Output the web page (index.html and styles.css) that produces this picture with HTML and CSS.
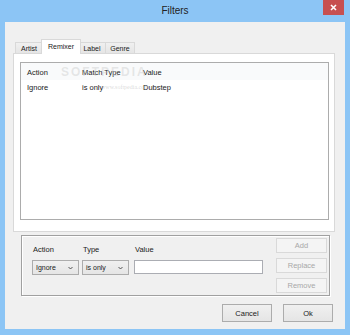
FILE: index.html
```html
<!DOCTYPE html>
<html lang="en">
<head>
    <meta charset="UTF-8">
    <title>Filters</title>
    <link rel="stylesheet" href="styles.css">
</head>
<body>
    <div class="window">
        <div class="titlebar">
            <span class="title">Filters</span>
            <div class="close">
                <svg width="7" height="7" viewBox="0 0 7 7"><path d="M1 1L6 6M6 1L1 6" stroke="#fff" stroke-width="1.6"/></svg>
            </div>
        </div>

        <div class="client">
            <div class="tabs">
                <div class="tab tab-artist">Artist</div>
                <div class="tab tab-remixer active">Remixer</div>
                <div class="tab tab-label">Label</div>
                <div class="tab tab-genre">Genre</div>
            </div>

            <div class="tab-panel">
                <div class="listview">
                    <div class="lv-row lv-head">
                        <span class="col-action">Action</span>
                        <span class="col-type">Match Type</span>
                        <span>Value</span>
                    </div>
                    <div class="lv-row">
                        <span class="col-action">Ignore</span>
                        <span class="col-type">is only</span>
                        <span>Dubstep</span>
                    </div>
                    <!-- site watermark over the list -->
                    <div class="watermark">SOFTPEDIA</div>
                    <div class="watermark-url">www.softpedia.com</div>
                </div>
            </div>

            <div class="groupbox">
                <div class="editor">
                    <span class="field-label">Action</span>
                    <span class="field-label">Type</span>
                    <span class="field-label field-value">Value</span>

                    <div class="combo">
                        <span>Ignore</span>
                        <svg width="5" height="4" viewBox="0 0 5 4"><path d="M0.5 1L2.5 3L4.5 1" fill="none" stroke="#444" stroke-width="0.9"/></svg>
                    </div>
                    <div class="combo">
                        <span>is only</span>
                        <svg width="5" height="4" viewBox="0 0 5 4"><path d="M0.5 1L2.5 3L4.5 1" fill="none" stroke="#444" stroke-width="0.9"/></svg>
                    </div>
                    <div class="textbox field-value"></div>
                </div>

                <div class="side-buttons">
                    <div class="btn disabled">Add</div>
                    <div class="btn disabled">Replace</div>
                    <div class="btn disabled">Remove</div>
                </div>
            </div>

            <div class="dialog-buttons">
                <div class="btn btn-cancel">Cancel</div>
                <div class="btn btn-ok">Ok</div>
            </div>
        </div>
    </div>
</body>
</html>
```

FILE: styles.css
```css
:root {
    --frame: #8cc5f5;
    --face: #f0f0f0;
    --tab-border: #d9d9d9;
    --btn-border: #acacac;
    --text: #1a1a1a;
}

* {
    box-sizing: border-box;
    margin: 0;
    padding: 0;
}

body {
    font-family: "Liberation Sans", Arial, sans-serif;
    font-size: 7.5px;
    color: var(--text);
    background: var(--frame);
}

.window {
    width: 350px;
    height: 335px;
    background: var(--frame);
    padding: 0 5px 6px 5px;
    display: flex;
    flex-direction: column;
}

.titlebar {
    height: 22px;
    position: relative;
    display: flex;
    justify-content: center;
    align-items: center;
    padding-bottom: 1px;
}

.title {
    font-size: 10px;
    color: #222;
}

.close {
    position: absolute;
    top: 0;
    right: 1px;
    width: 21px;
    height: 15px;
    background: #c75050;
    display: flex;
    justify-content: center;
    align-items: center;
}

.client {
    flex: 1;
    background: var(--face);
    display: flex;
    flex-direction: column;
    align-items: flex-start;
}

/* tabs */
.tabs {
    display: flex;
    align-items: flex-end;
    height: 14px;
    margin-top: 17px;
    margin-left: 10px;
    position: relative;
    z-index: 1;
}

.tab {
    height: 11px;
    border: 1px solid var(--tab-border);
    border-bottom: none;
    background: linear-gradient(#f0f0f0, #e5e5e5);
    display: flex;
    justify-content: center;
    align-items: center;
    font-size: 7px;
}

.tab-artist { width: 28px; }
.tab-label { width: 27px; border-left: none; }
.tab-genre { width: 29px; border-left: none; }

.tab.active {
    width: 40px;
    height: 15px;
    margin: 0 -2px -1px -2px;
    background: #fff;
    padding-bottom: 2px;
    position: relative;
    z-index: 2;
}

.tab-panel {
    width: 322px;
    height: 179px;
    margin-left: 8px;
    border: 1px solid var(--tab-border);
    background: #fff;
    padding: 8px 5px 11px 6px;
    display: flex;
    align-self: flex-start;
}

.listview {
    flex: 1;
    border: 1px solid #acacac;
    background: #fff;
    position: relative;
}

.lv-row {
    display: flex;
    height: 14px;
    align-items: center;
    padding-left: 6px;
}

.lv-head {
    height: 17px;
    background: #f9fafb;
    padding-top: 2px;
}

.col-action { width: 55px; }
.col-type { width: 61px; }

.watermark {
    position: absolute;
    left: 40px;
    top: 2px;
    font-size: 12px;
    letter-spacing: 2px;
    color: rgba(190, 190, 190, 0.35);
    font-weight: bold;
}

.watermark-url {
    position: absolute;
    left: 80px;
    top: 21px;
    font-size: 6px;
    color: rgba(170, 170, 170, 0.45);
    font-family: "Liberation Serif", serif;
}

/* lower group */
.groupbox {
    width: 309px;
    height: 61px;
    margin: 3px 0 0 16px;
    border: 1px solid #a0a0a0;
    box-shadow: inset 1px 1px #fff, 1px 1px #fff;
    display: flex;
    justify-content: space-between;
    padding: 2px 2px 2px 10px;
}

.editor {
    display: grid;
    grid-template-columns: 47px 47px 131px;
    grid-template-rows: 12px 15px;
    column-gap: 3px;
    row-gap: 5px;
    padding-top: 5px;
}

.field-label {
    padding-left: 1px;
    display: flex;
    align-items: center;
}

.field-value { margin-left: 2px; }

.combo {
    border: 1px solid var(--btn-border);
    background: linear-gradient(#f0f0f0, #e5e5e5);
    display: flex;
    justify-content: space-between;
    align-items: center;
    padding: 0 5px 0 3px;
    font-size: 7px;
}

.textbox {
    height: 14px;
    border: 1px solid #abadb3;
    background: #fff;
}

.side-buttons {
    display: flex;
    flex-direction: column;
    gap: 5px;
}

.btn {
    width: 51px;
    height: 15px;
    border: 1px solid var(--btn-border);
    background: linear-gradient(#f0f0f0, #e5e5e5);
    display: flex;
    justify-content: center;
    align-items: center;
}

.btn.disabled {
    border-color: #d9d9d9;
    background: #f4f4f4;
    color: #a8a8a8;
}

.dialog-buttons {
    display: flex;
    gap: 11px;
    align-self: flex-end;
    margin: 8px 12px 0 0;
}

.dialog-buttons .btn {
    width: 50px;
    height: 18px;
}
```
